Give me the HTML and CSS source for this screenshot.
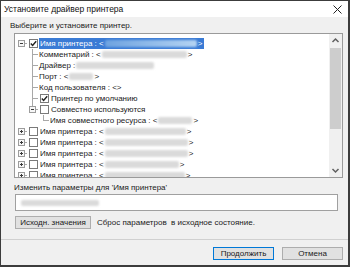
FILE: index.html
```html
<!DOCTYPE html>
<html lang="ru">
<head>
    <meta charset="UTF-8">
    <title>Установите драйвер принтера</title>
    <link rel="stylesheet" href="styles.css">
</head>
<body>

    <div class="window">
        <div class="titlebar">
            <span class="title">Установите драйвер принтера</span>
            <svg class="close" width="9" height="9" viewBox="0 0 9 9"><path d="M0.5 0.5 L8.5 8.5 M8.5 0.5 L0.5 8.5" stroke="#222" stroke-width="1"/></svg>
        </div>

        <div class="content">
            <div class="prompt">Выберите и установите принтер.</div>

            <div class="tree">
                <div class="tree-list">
                    <div class="row">
                        <span class="cell exp-cell"><span class="exp"></span></span>
                        <span class="chk on"><svg width="7" height="7" viewBox="0 0 7 7"><path d="M0.8 3.6 L2.6 5.4 L6.2 1.2" fill="none" stroke="#222" stroke-width="1.4"/></svg></span>
                        <span class="label sel">Имя принтера : &lt;<span class="redact" style="width:92px"></span>&gt;</span>
                    </div>
                    <div class="row">
                        <span class="cell"></span>
                        <span class="cell tee"></span>
                        <span class="label">Комментарий : &lt;<span class="redact" style="width:85px"></span>&gt;</span>
                    </div>
                    <div class="row">
                        <span class="cell"></span>
                        <span class="cell tee"></span>
                        <span class="label">Драйвер : <span class="redact" style="width:78px"></span></span>
                    </div>
                    <div class="row">
                        <span class="cell"></span>
                        <span class="cell tee"></span>
                        <span class="label">Порт : &lt;<span class="redact" style="width:24px"></span>&gt;</span>
                    </div>
                    <div class="row">
                        <span class="cell"></span>
                        <span class="cell tee"></span>
                        <span class="label">Код пользователя : &lt;&gt;</span>
                    </div>
                    <div class="row">
                        <span class="cell"></span>
                        <span class="cell tee"></span>
                        <span class="chk on"><svg width="7" height="7" viewBox="0 0 7 7"><path d="M0.8 3.6 L2.6 5.4 L6.2 1.2" fill="none" stroke="#222" stroke-width="1.4"/></svg></span>
                        <span class="label">Принтер по умолчанию</span>
                    </div>
                    <div class="row">
                        <span class="cell"></span>
                        <span class="cell elbow exp-cell"><span class="exp"></span></span>
                        <span class="chk"></span>
                        <span class="label">Совместно используются</span>
                    </div>
                    <div class="row">
                        <span class="cell"></span>
                        <span class="cell"></span>
                        <span class="cell elbow"></span>
                        <span class="label">Имя совместного ресурса : &lt;<span class="redact" style="width:34px"></span>&gt;</span>
                    </div>
                    <div class="row">
                        <span class="cell exp-cell"><span class="exp plus"></span></span>
                        <span class="chk"></span>
                        <span class="label">Имя принтера : &lt;<span class="redact" style="width:81px"></span>&gt;</span>
                    </div>
                    <div class="row">
                        <span class="cell exp-cell"><span class="exp plus"></span></span>
                        <span class="chk"></span>
                        <span class="label">Имя принтера : &lt;<span class="redact" style="width:83px"></span>&gt;</span>
                    </div>
                    <div class="row">
                        <span class="cell exp-cell"><span class="exp plus"></span></span>
                        <span class="chk"></span>
                        <span class="label">Имя принтера : &lt;<span class="redact" style="width:83px"></span>&gt;</span>
                    </div>
                    <div class="row">
                        <span class="cell exp-cell"><span class="exp plus"></span></span>
                        <span class="chk"></span>
                        <span class="label">Имя принтера : &lt;<span class="redact" style="width:74px"></span>&gt;</span>
                    </div>
                    <div class="row">
                        <span class="cell exp-cell"><span class="exp plus"></span></span>
                        <span class="chk"></span>
                        <span class="label">Имя принтера : &lt;<span class="redact" style="width:80px"></span>&gt;</span>
                    </div>
                </div>

                <div class="scrollbar">
                    <svg class="arrow" width="13" height="13" viewBox="0 0 13 13"><path d="M3.5 8 L6.5 5 L9.5 8" fill="none" stroke="#606060" stroke-width="1.5"/></svg>
                    <div class="track"><div class="thumb"></div></div>
                    <svg class="arrow" width="13" height="13" viewBox="0 0 13 13"><path d="M3.5 5 L6.5 8 L9.5 5" fill="none" stroke="#606060" stroke-width="1.5"/></svg>
                </div>
            </div>

            <div class="param-label">Изменить параметры для 'Имя принтера'</div>
            <div class="param-field"><span class="redact field-redact"></span></div>

            <div class="reset-row">
                <button class="btn reset-btn">Исходн. значения</button>
                <span>Сброс параметров &nbsp;в исходное состояние.</span>
            </div>
        </div>

        <div class="footer">
            <button class="btn btn-default">Продолжить</button>
            <button class="btn">Отмена</button>
        </div>
    </div>

</body>
</html>
```

FILE: styles.css
```css
body {
    margin: 0;
    padding: 0;
    font-family: "Liberation Sans", Arial, sans-serif;
    font-size: 8px;
    color: #1a1a1a;
}

.window {
    width: 350px;
    height: 267px;
    box-sizing: border-box;
    border: 1px solid #3c3c3c;
    border-right-width: 2px;
    border-bottom-width: 2px;
    background-color: #f0f0f0;
    display: flex;
    flex-direction: column;
}

.titlebar {
    height: 16px;
    background-color: #ffffff;
    display: flex;
    align-items: center;
    justify-content: space-between;
    padding: 0 6px 0 3px;
}

.title {
    font-size: 8.5px;
    color: #111;
}

.content {
    padding: 0 5px 0 13px;
    display: flex;
    flex-direction: column;
}

.prompt {
    margin: 3px 0 0 -4px;
    line-height: 11px;
}

.tree {
    margin-top: 2px;
    height: 145px;
    box-sizing: border-box;
    border: 1px solid #9a9a9a;
    background-color: #ffffff;
    display: flex;
}

.tree-list {
    flex: 1;
    overflow: hidden;
    padding: 4px 0 0 1px;
}

.row {
    height: 11px;
    display: flex;
    align-items: center;
    white-space: nowrap;
}

.cell {
    width: 11px;
    height: 11px;
    flex: none;
    display: flex;
    align-items: center;
    justify-content: center;
}

.tee {
    background:
        linear-gradient(#a8a8a8, #a8a8a8) 5px 0 / 1px 11px no-repeat,
        linear-gradient(#a8a8a8, #a8a8a8) 5px 5px / 6px 1px no-repeat;
}

.elbow {
    background:
        linear-gradient(#a8a8a8, #a8a8a8) 5px 0 / 1px 6px no-repeat,
        linear-gradient(#a8a8a8, #a8a8a8) 5px 5px / 6px 1px no-repeat;
}

.exp-cell {
    background-image: linear-gradient(#a8a8a8, #a8a8a8);
    background-position: 8px 5px;
    background-size: 3px 1px;
    background-repeat: no-repeat;
}

.elbow.exp-cell {
    background:
        linear-gradient(#a8a8a8, #a8a8a8) 5px 0 / 1px 3px no-repeat,
        linear-gradient(#a8a8a8, #a8a8a8) 8px 5px / 3px 1px no-repeat;
}

.exp {
    width: 7px;
    height: 7px;
    box-sizing: border-box;
    border: 1px solid #9c9c9c;
    background:
        linear-gradient(#3a3a3a, #3a3a3a) center / 3px 1px no-repeat,
        #f7f7f7;
}

.exp.plus {
    background:
        linear-gradient(#3a3a3a, #3a3a3a) center / 3px 1px no-repeat,
        linear-gradient(#3a3a3a, #3a3a3a) center / 1px 3px no-repeat,
        #f7f7f7;
}

.chk {
    width: 9px;
    height: 9px;
    box-sizing: border-box;
    border: 1px solid #7a7a7a;
    background-color: #ffffff;
    margin-left: 2px;
    flex: none;
    display: flex;
    align-items: center;
    justify-content: center;
}

.chk + .label {
    margin-left: 1px;
}

.label {
    line-height: 11px;
    padding: 0 2px 0 1px;
    display: flex;
    align-items: center;
}

.label.sel {
    background-color: #3a7bd5;
    color: #ffffff;
}

.redact {
    display: inline-block;
    height: 7px;
    margin: 0 1px;
    background-color: #dadada;
    border-radius: 2px;
    filter: blur(0.8px);
}

.sel .redact {
    background: linear-gradient(90deg, #6ea3e0, #b4d3f2);
}

.scrollbar {
    width: 13px;
    flex: none;
    background-color: #f0f0f0;
    display: flex;
    flex-direction: column;
}

.track {
    flex: 1;
}

.thumb {
    height: 81px;
    margin: 1px 1px 0;
    background-color: #cdcdcd;
}

.param-label {
    margin-top: 4px;
    line-height: 11px;
}

.param-field {
    margin: 1px 5px 0 1px;
    height: 17px;
    box-sizing: border-box;
    border: 1px solid #a0a0a0;
    background-color: #ffffff;
    display: flex;
    align-items: center;
    padding-left: 4px;
}

.field-redact {
    width: 78px;
    height: 6px;
}

.reset-row {
    margin: 5px 0 0 1px;
    display: flex;
    align-items: center;
    gap: 6px;
}

.btn {
    font-family: "Liberation Sans", Arial, sans-serif;
    font-size: 8px;
    color: #1a1a1a;
    height: 13px;
    padding: 0;
    border: 1px solid #adadad;
    background-color: #e1e1e1;
}

.reset-btn {
    width: 76px;
}

.footer {
    margin-top: auto;
    height: 26px;
    box-sizing: border-box;
    border-top: 1px solid #d0d0d0;
    display: flex;
    justify-content: flex-end;
    padding: 7px 5px 0 0;
    gap: 8px;
}

.footer .btn {
    width: 61px;
}

.btn-default {
    border-color: #0078d7;
}
```
